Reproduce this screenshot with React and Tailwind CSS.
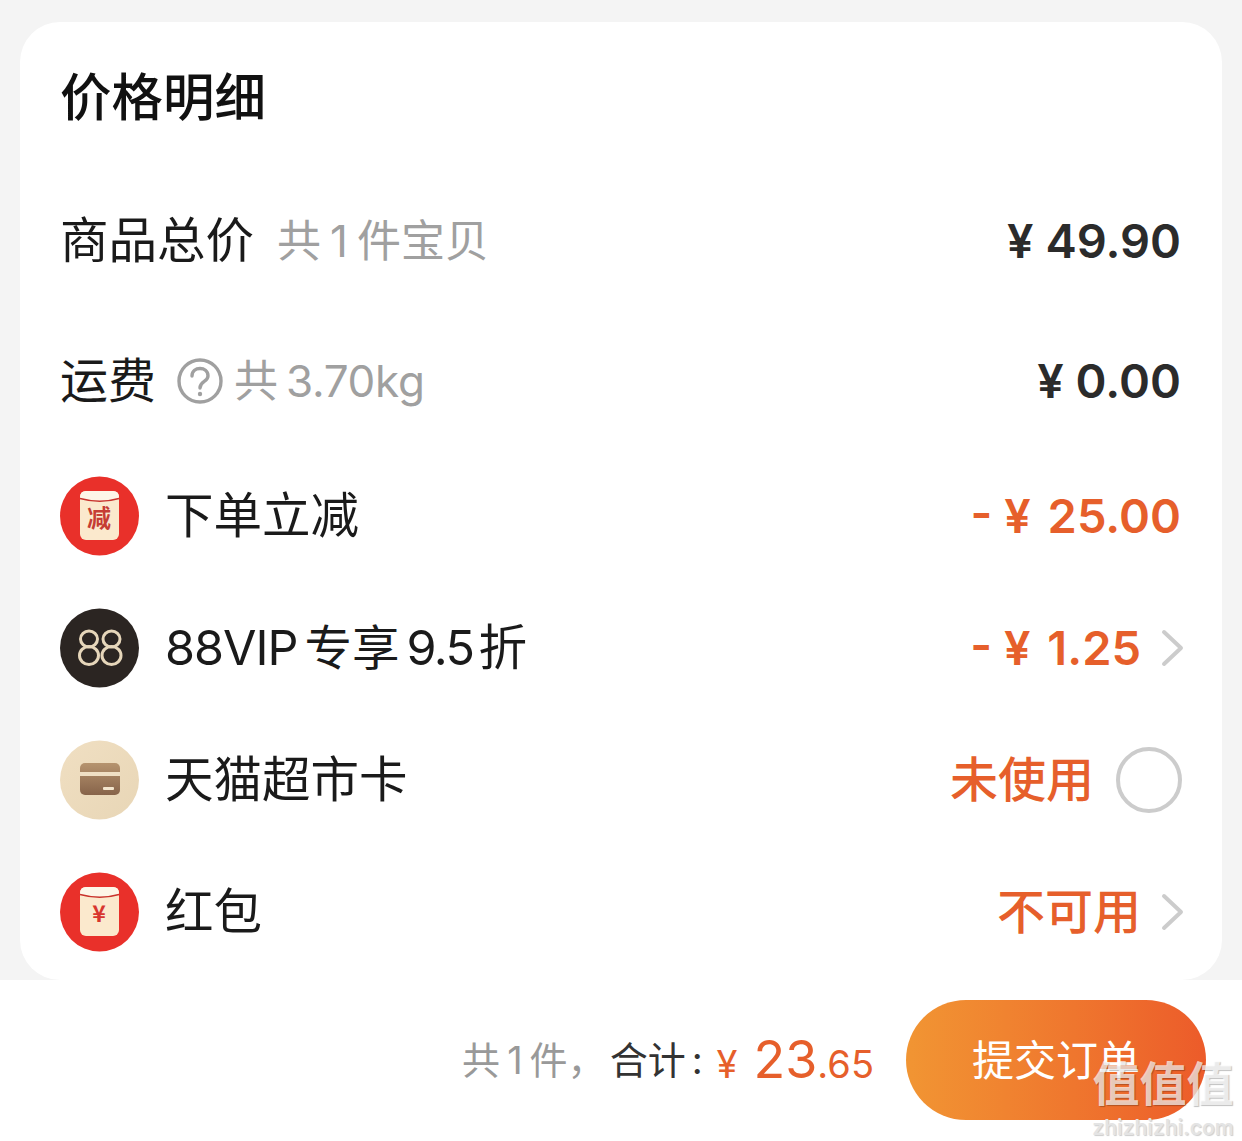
const cjk = "font-['Inter','Noto_Sans_CJK_SC',sans-serif]";

function Chevron() {
  return (
    <svg width="24" height="38" viewBox="0 0 24 38" fill="none" className="ml-[20px] mr-[-4px]">
      <path d="M3 3 L20 19 L3 35" stroke="#cccccc" strokeWidth="4" strokeLinecap="round" strokeLinejoin="round" />
    </svg>
  );
}

function RedIcon({ children }) {
  return (
    <svg width="80" height="80" viewBox="0 0 80 80">
      <circle cx="39.5" cy="40" r="39.5" fill="#e9302a" />
      <rect x="20" y="15" width="39" height="49" rx="6" fill="#fbe9cd" />
      <path d="M20 21 Q20 15 26 15 L53 15 Q59 15 59 21 L59 23 Q40 28 20 23 Z" fill="#fdf6e8" />
      <path d="M20 22.5 Q40 28 59 22.5" fill="none" stroke="#c9332c" strokeWidth="1.4" />
      {children}
    </svg>
  );
}

function VipIcon() {
  return (
    <svg width="80" height="80" viewBox="0 0 80 80">
      <circle cx="39.5" cy="40" r="39.5" fill="#2b2522" />
      <g fill="none" stroke="#e6d6ba" strokeWidth="3">
        <ellipse cx="29" cy="31" rx="8.5" ry="8" />
        <ellipse cx="29" cy="47.5" rx="9.5" ry="9" />
        <ellipse cx="51.5" cy="31" rx="8.5" ry="8" />
        <ellipse cx="51.5" cy="47.5" rx="9.5" ry="9" />
      </g>
    </svg>
  );
}

function CardIcon() {
  return (
    <svg width="80" height="80" viewBox="0 0 80 80">
      <defs>
        <linearGradient id="beige" x1="0" y1="0" x2="1" y2="1">
          <stop offset="0" stopColor="#f0dfc2" />
          <stop offset="1" stopColor="#e8d6b6" />
        </linearGradient>
        <linearGradient id="brown" x1="0" y1="0" x2="0" y2="1">
          <stop offset="0" stopColor="#b6946f" />
          <stop offset="1" stopColor="#87644a" />
        </linearGradient>
      </defs>
      <circle cx="39.5" cy="40" r="39.5" fill="url(#beige)" />
      <rect x="20" y="23" width="40" height="32" rx="5" fill="url(#brown)" />
      <rect x="20" y="32" width="40" height="4" fill="#efdfc4" />
      <rect x="43" y="47" width="11" height="3" rx="1" fill="#f3e5cd" />
    </svg>
  );
}

function Row({ icon, label, right }) {
  return (
    <div className="h-[132px] flex items-center justify-between">
      <div className="flex items-center">
        {icon}
        <span className="ml-[25px] text-[48.5px] text-[#1a1a1a] flex items-center">{label}</span>
      </div>
      <div className="flex items-center">{right}</div>
    </div>
  );
}

function Price({ sign, value, className = "" }) {
  return (
    <span className={"text-[47px] font-semibold whitespace-pre " + className}>
      {sign}
      <span className="ml-[5px]">{value}</span>
    </span>
  );
}

export default function App() {
  return (
    <div className={"relative w-[1242px] h-[1141px] overflow-hidden bg-[#f4f4f4] pt-[22px] " + cjk}>
      <div className="mx-[20px] h-[958px] rounded-[40px] bg-white pl-[40px] pr-[41px] pt-[50px]">
        <div className="h-[50px] leading-[50px] text-[51.5px] font-medium text-[#111111]">价格明细</div>

        <div className="mt-[53px] h-[132px] flex items-center justify-between">
          <div className="flex items-center">
            <span className="text-[48.5px] text-[#1a1a1a]">商品总价</span>
            <span className="ml-[23px] text-[44px] text-[#a0a0a0]">
              共<span className="mx-[9px]">1</span>件宝贝
            </span>
          </div>
          <span className="text-[47px] font-semibold text-[#2b2b2b]">¥ 49.90</span>
        </div>

        <div className="mt-[8px] h-[132px] flex items-center justify-between">
          <div className="flex items-center">
            <span className="text-[48px] text-[#1a1a1a]">运费</span>
            <svg width="46" height="46" viewBox="0 0 46 46" fill="none" className="ml-[21px]">
              <circle cx="23" cy="23" r="21" stroke="#a0a0a0" strokeWidth="3.4" />
              <path d="M15 18 C15 8 31 8 31 18 C31 24 23 23 23 30" stroke="#a0a0a0" strokeWidth="3.4" strokeLinecap="round" />
              <circle cx="23" cy="36" r="2.2" fill="#a0a0a0" />
            </svg>
            <span className="ml-[11px] text-[44px] text-[#a0a0a0]">
              共<span className="ml-[8px] tracking-[-0.3px]">3.70kg</span>
            </span>
          </div>
          <span className="text-[47px] font-semibold text-[#2b2b2b]">¥ 0.00</span>
        </div>

        <div className="mt-[3px]">
          <Row
            icon={
              <RedIcon>
                <text x="39" y="51" textAnchor="middle" fontSize="24" fontWeight="700" fill="#c63d34" fontFamily="'Noto Sans CJK SC'">减</text>
              </RedIcon>
            }
            label="下单立减"
            right={<Price sign="- ¥ " value="25.00" className="text-[#e65f2b]" />}
          />
          <Row
            icon={<VipIcon />}
            label={
              <>
                <span className="tracking-[-1px]">88VIP</span>
                <span className="ml-[7px] text-[47.5px]">专享</span>
                <span className="ml-[7px] tracking-[-1.5px]">9.5</span>
                <span className="ml-[5px]">折</span>
              </>
            }
            right={
              <>
                <Price sign="- ¥ " value="1.25" className="text-[#e65f2b]" />
                <Chevron />
              </>
            }
          />
          <Row
            icon={<CardIcon />}
            label="天猫超市卡"
            right={
              <>
                <span className="text-[48px] font-medium text-[#e65f2b]">未使用</span>
                <span className="ml-[22px] mr-[-1px] size-[66px] rounded-full border-[4px] border-[#cccccc]" />
              </>
            }
          />
          <Row
            icon={
              <RedIcon>
                <text x="39" y="50" textAnchor="middle" fontSize="23" fontWeight="700" fill="#d8362e" fontFamily="'Noto Sans CJK SC'">¥</text>
              </RedIcon>
            }
            label="红包"
            right={
              <>
                <span className="text-[48px] font-medium text-[#e65f2b]">不可用</span>
                <Chevron />
              </>
            }
          />
        </div>
      </div>

      <div className="h-[161px] bg-white flex justify-end items-start pt-[20px] pr-[36px]">
        <div className="h-[120px] flex items-center mr-[32px]">
          <span className="text-[38px] text-[#999999]">
            共<span className="mx-[7px]">1</span>件{"\uFF0C"}
          </span>
          <span className="ml-[4px] text-[38px] text-[#333333]">合计<span className="ml-[6px]">:</span></span>
          <div className="flex items-baseline text-[#e65f2b]">
            <span className="ml-[14px] text-[38px]">¥</span>
            <span className="ml-[16px] text-[52px]">23</span>
            <span className="text-[38px]">.65</span>
          </div>
        </div>
        <div className="w-[300px] h-[120px] rounded-full bg-gradient-to-r from-[#f19533] to-[#ec5b2a] flex items-center justify-center text-[42px] text-white">
          提交订单
        </div>
      </div>

      <div className="absolute left-[1092px] top-[1053px] w-[142px] text-center pointer-events-none">
        <div className="text-[47px] leading-[62px] font-bold text-white/70 whitespace-nowrap [text-shadow:1px_1px_1px_rgba(0,0,0,0.25)]">值值值</div>
        <div className="text-[21px] leading-[26px] font-semibold text-[#e4e4e4] [text-shadow:1px_1px_1px_rgba(0,0,0,0.2)]">zhizhizhi.com</div>
      </div>
    </div>
  );
}
